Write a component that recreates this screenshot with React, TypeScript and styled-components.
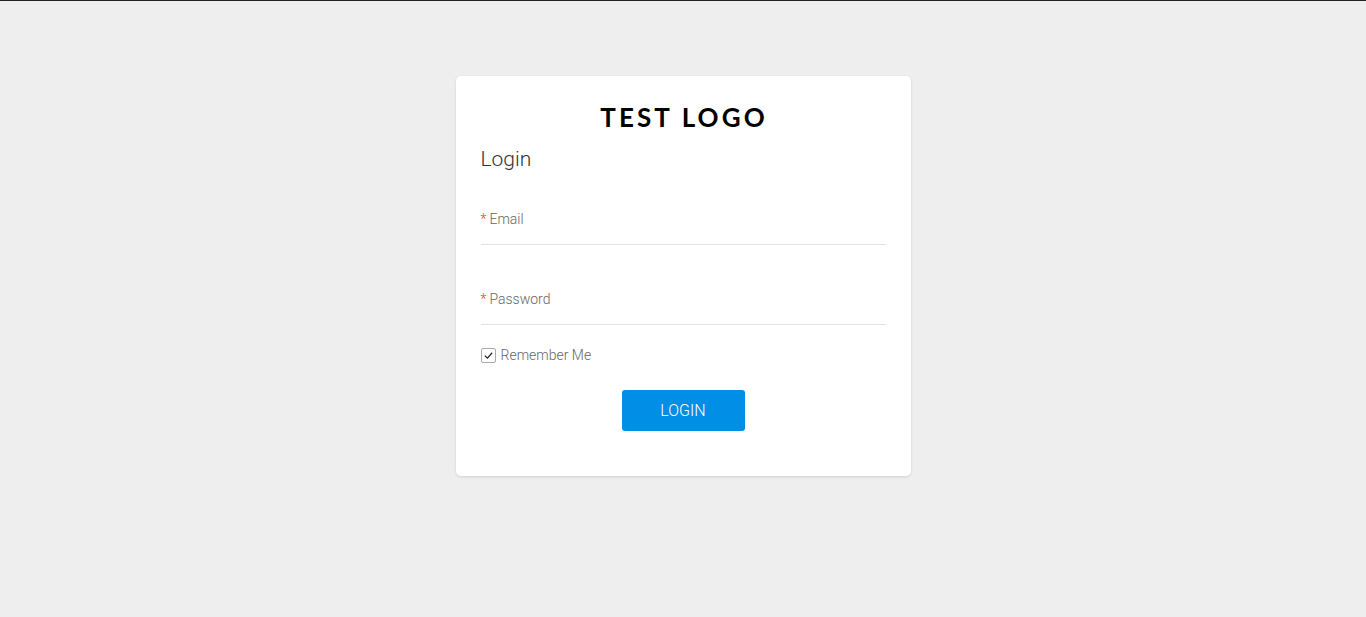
import React from "react";
import styled, { createGlobalStyle } from "styled-components";

const Global = createGlobalStyle`
  html, body { margin: 0; padding: 0; }
  body {
    background: #eeeeee;
    border-top: 1px solid #222222;
    font-family: Roboto, "Liberation Sans", sans-serif;
    min-height: 616px;
  }
  * { box-sizing: border-box; }
`;

const Page = styled.div`
  display: flex;
  justify-content: center;
  padding-top: 75px;
`;

const Card = styled.form`
  width: 455px;
  height: 400px;
  background: #ffffff;
  border-radius: 5px;
  box-shadow: 0 1px 3px rgba(0, 0, 0, 0.12);
  padding: 24px 25px 0;
  display: flex;
  flex-direction: column;
`;

const Logo = styled.div`
  text-align: center;
  font-family: Lato, "Open Sans", sans-serif;
  font-weight: 700;
  font-size: 26px;
  letter-spacing: 3.1px;
  line-height: 34px;
  padding-left: 2px;
  color: #000;
`;

const Title = styled.h1`
  margin: 12px 0 0;
  font-family: Roboto, sans-serif;
  font-weight: 300;
  font-size: 21px;
  line-height: 26px;
  color: #333;
`;

const Field = styled.div<{ $top: number }>`
  margin-top: ${(p) => p.$top}px;
  border-bottom: 1px solid #e2e2e2;
  height: 42px;
  padding-top: 6px;
`;

const Label = styled.label`
  font-family: Roboto, sans-serif;
  font-weight: 300;
  font-size: 14px;
  line-height: 18px;
  color: #666;
`;

const Req = styled.span`
  color: #f5313d;
  margin-right: 3px;
`;

const CheckRow = styled.label`
  display: flex;
  align-items: center;
  gap: 5px;
  margin-top: 21px;
  font-family: Roboto, sans-serif;
  font-weight: 300;
  font-size: 14px;
  color: #666;
  line-height: 18px;
`;

const Box = styled.span`
  width: 15px;
  height: 15px;
  border: 1px solid #a9a9a9;
  border-radius: 2px;
  display: flex;
  align-items: center;
  justify-content: center;
`;

const ButtonRow = styled.div`
  display: flex;
  justify-content: center;
  margin-top: 26px;
`;

const Button = styled.button`
  width: 123px;
  height: 41px;
  border: none;
  border-radius: 3px;
  background: #008ee6;
  color: #fff;
  font-family: Roboto, sans-serif;
  font-weight: 300;
  font-size: 16px;
  cursor: pointer;
`;

export default function App() {
  return (
    <>
      <Global />
      <Page>
        <Card onSubmit={(e) => e.preventDefault()}>
          <Logo>TEST LOGO</Logo>
          <Title>Login</Title>
          <Field $top={31}>
            <Label><Req>*</Req>Email</Label>
          </Field>
          <Field $top={38}>
            <Label><Req>*</Req>Password</Label>
          </Field>
          <CheckRow>
            <Box>
              <svg width="11" height="11" viewBox="0 0 12 12">
                <path d="M2 6.2 L4.8 9 L10 3" fill="none" stroke="#222" strokeWidth="1.3" />
              </svg>
            </Box>
            Remember Me
          </CheckRow>
          <ButtonRow>
            <Button type="submit">LOGIN</Button>
          </ButtonRow>
        </Card>
      </Page>
    </>
  );
}
